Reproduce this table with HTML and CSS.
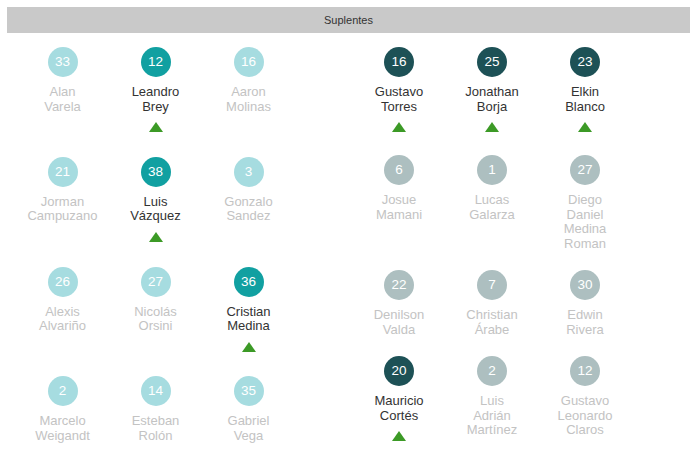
FILE: index.html
```html
<!DOCTYPE html>
<html lang="es">
<head>
<meta charset="utf-8">
<title>Suplentes</title>
<link rel="stylesheet" href="styles.css">
</head>
<body>
<div class="panel">
  <div class="header">Suplentes</div>
  <div class="teams">
    <div class="team team-home">
      <div class="player"><div class="num">33</div><div class="name"><span>Alan</span><span>Varela</span></div></div>
      <div class="player on"><div class="num">12</div><div class="name"><span>Leandro</span><span>Brey</span></div><div class="arrow"></div></div>
      <div class="player"><div class="num">16</div><div class="name"><span>Aaron</span><span>Molinas</span></div></div>

      <div class="player"><div class="num">21</div><div class="name"><span>Jorman</span><span>Campuzano</span></div></div>
      <div class="player on"><div class="num">38</div><div class="name"><span>Luis</span><span>Vázquez</span></div><div class="arrow"></div></div>
      <div class="player"><div class="num">3</div><div class="name"><span>Gonzalo</span><span>Sandez</span></div></div>

      <div class="player"><div class="num">26</div><div class="name"><span>Alexis</span><span>Alvariño</span></div></div>
      <div class="player"><div class="num">27</div><div class="name"><span>Nicolás</span><span>Orsini</span></div></div>
      <div class="player on"><div class="num">36</div><div class="name"><span>Cristian</span><span>Medina</span></div><div class="arrow"></div></div>

      <div class="player"><div class="num">2</div><div class="name"><span>Marcelo</span><span>Weigandt</span></div></div>
      <div class="player"><div class="num">14</div><div class="name"><span>Esteban</span><span>Rolón</span></div></div>
      <div class="player"><div class="num">35</div><div class="name"><span>Gabriel</span><span>Vega</span></div></div>
    </div>
    <div class="team team-away">
      <div class="player on"><div class="num">16</div><div class="name"><span>Gustavo</span><span>Torres</span></div><div class="arrow"></div></div>
      <div class="player on"><div class="num">25</div><div class="name"><span>Jonathan</span><span>Borja</span></div><div class="arrow"></div></div>
      <div class="player on"><div class="num">23</div><div class="name"><span>Elkin</span><span>Blanco</span></div><div class="arrow"></div></div>

      <div class="player"><div class="num">6</div><div class="name"><span>Josue</span><span>Mamani</span></div></div>
      <div class="player"><div class="num">1</div><div class="name"><span>Lucas</span><span>Galarza</span></div></div>
      <div class="player"><div class="num">27</div><div class="name"><span>Diego</span><span>Daniel</span><span>Medina</span><span>Roman</span></div></div>

      <div class="player"><div class="num">22</div><div class="name"><span>Denilson</span><span>Valda</span></div></div>
      <div class="player"><div class="num">7</div><div class="name"><span>Christian</span><span>Árabe</span></div></div>
      <div class="player"><div class="num">30</div><div class="name"><span>Edwin</span><span>Rivera</span></div></div>

      <div class="player on"><div class="num">20</div><div class="name"><span>Mauricio</span><span>Cortés</span></div><div class="arrow"></div></div>
      <div class="player"><div class="num">2</div><div class="name"><span>Luis</span><span>Adrián</span><span>Martínez</span></div></div>
      <div class="player"><div class="num">12</div><div class="name"><span>Gustavo</span><span>Leonardo</span><span>Claros</span></div></div>
    </div>
  </div>
</div>
</body>
</html>
```

FILE: styles.css
```css
html, body {
  margin: 0;
  padding: 0;
  background: #ffffff;
}

body {
  font-family: "Liberation Sans", Arial, sans-serif;
}

.panel {
  padding: 7px 8px 0 7px;
}

.header {
  height: 26px;
  line-height: 26px;
  background: #c9c9c9;
  color: #333333;
  font-size: 11px;
  text-align: center;
}

.teams {
  display: flex;
  padding: 14px 0 0 9px;
}

.team {
  width: 336.5px;
  display: grid;
  grid-template-columns: repeat(3, 93px);
  align-items: start;
}

.player {
  display: flex;
  flex-direction: column;
  align-items: center;
  padding-bottom: 19px;
}

.num {
  width: 30px;
  height: 30px;
  border-radius: 50%;
  color: #ffffff;
  font-size: 13.5px;
  line-height: 30px;
  text-align: center;
  margin-bottom: 8px;
}

.team-home .num { background: #a6dce0; }
.team-home .on .num { background: #11a0a1; }
.team-away .num { background: #adbfc0; }
.team-away .on .num { background: #1d5156; }

.name {
  display: flex;
  flex-direction: column;
  align-items: center;
  font-size: 13px;
  line-height: 14.5px;
  color: #c3c3c3;
  text-align: center;
}

.on .name { color: #333333; }

.arrow {
  width: 0;
  height: 0;
  margin: 8px 0 4px;
  border-left: 7.5px solid transparent;
  border-right: 7.5px solid transparent;
  border-bottom: 10px solid #3c9a26;
}
```
